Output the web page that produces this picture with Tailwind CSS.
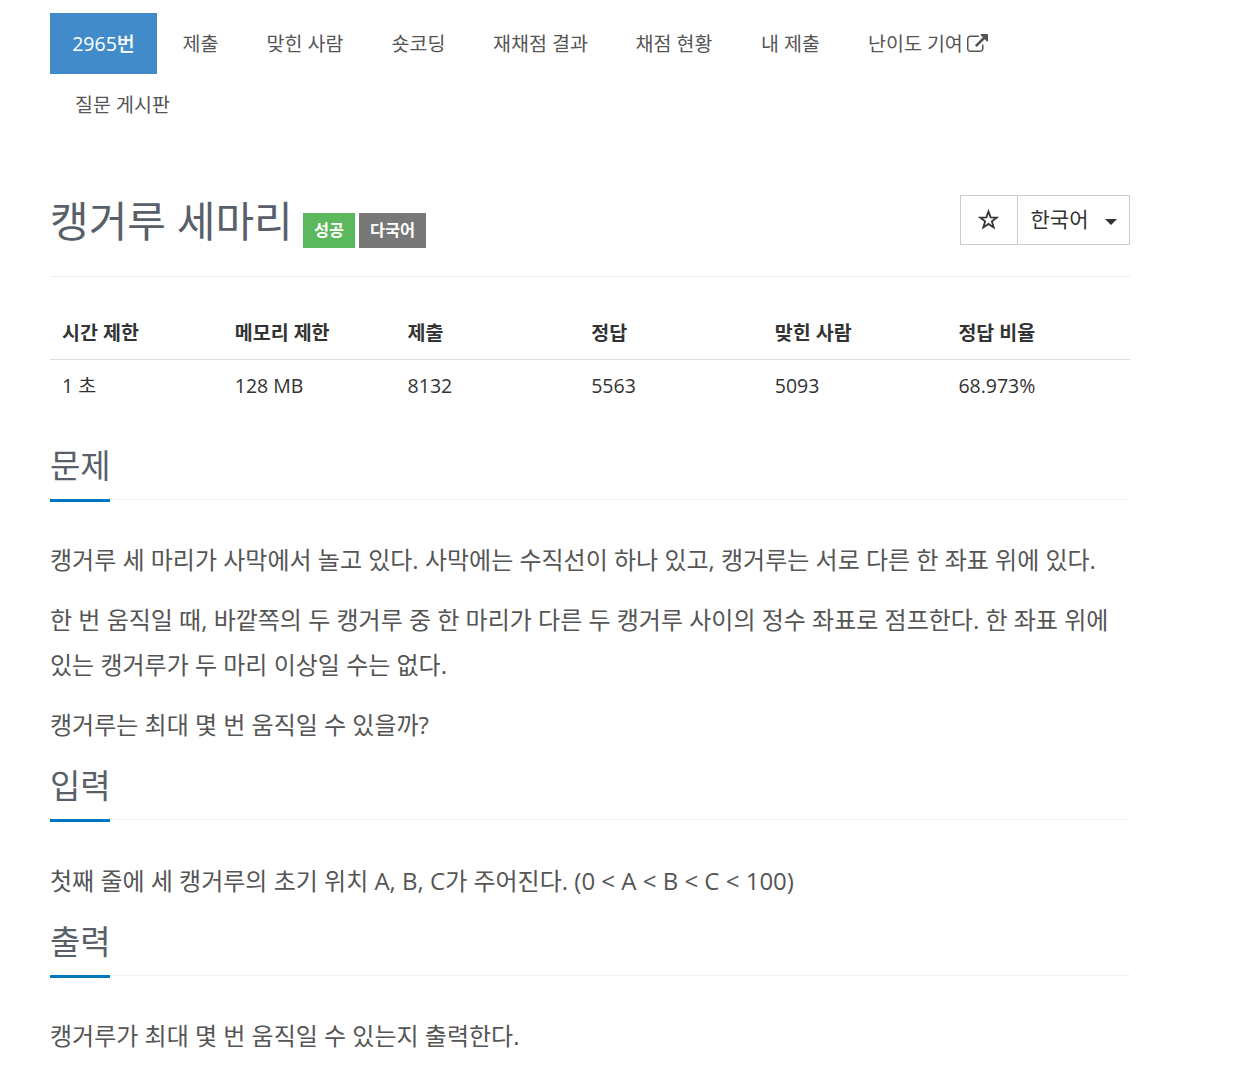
<!DOCTYPE html>
<html lang="ko">
<head>
    <meta charset="UTF-8">
    <meta name="viewport" content="width=device-width, initial-scale=1.0">
    <title>2965번: 캥거루 세마리</title>
    <script src="https://cdn.jsdelivr.net/npm/@tailwindcss/browser@4"></script>
</head>
<body class="bg-white font-['Open_Sans','Noto_Sans_CJK_KR',sans-serif] text-[#333]">
    <div class="ml-[50px] w-[1080px] pt-[13px]">
        <nav>
            <ul class="flex flex-wrap text-[19.5px] leading-[61px] text-[#555]">
                <li class="w-[107px] bg-[#428bca] text-center text-white"><a href="#">2965<span class="font-medium">번</span></a></li>
                <li class="w-[87px] text-center"><a href="#">제출</a></li>
                <li class="w-[122px] text-center"><a href="#">맞힌 사람</a></li>
                <li class="w-[105px] text-center"><a href="#">숏코딩</a></li>
                <li class="w-[139px] text-center"><a href="#">재채점 결과</a></li>
                <li class="w-[128px] text-center"><a href="#">채점 현황</a></li>
                <li class="w-[105px] text-center"><a href="#">내 제출</a></li>
                <li class="w-[170px] pl-[25px]"><a href="#" class="flex items-center gap-1">난이도 기여
                    <svg class="h-[18px] w-[21px] -translate-y-px" viewBox="0 0 1792 1536" fill="currentColor"><path d="M1408 928v320q0 119-84.500 203.500t-203.500 84.500h-832q-119 0-203.500-84.500t-84.500-203.500v-832q0-119 84.500-203.500t203.500-84.500h704q14 0 23 9t9 23v64q0 14-9 23t-23 9h-704q-66 0-113 47t-47 113v832q0 66 47 113t113 47h832q66 0 113-47t47-113v-320q0-14 9-23t23-9h64q14 0 23 9t9 23zM1792 64v512q0 26-19 45t-45 19-45-19l-176-176-652 652q-10 10-23 10t-23-10l-114-114q-10-10-10-23t10-23l652-652-176-176q-19-19-19-45t19-45 45-19h512q26 0 45 19t19 45z"/></svg></a></li>
                <li class="w-[145px] text-center"><a href="#">질문 게시판</a></li>
            </ul>
        </nav>

        <header class="mt-[60px] flex h-[82px] justify-between border-b border-[#eee]">
            <div class="flex">
                <h1 class="w-[253px] text-[42px] leading-[51px] text-[#585f69]">캥거루 세마리</h1>
                <div class="mt-[18px] flex gap-1 text-[16.4px] font-bold leading-[34px] text-white">
                    <span class="h-[35px] w-[52px] bg-[#5cb85c] text-center">성공</span>
                    <span class="h-[35px] w-[67px] bg-[#777] text-center">다국어</span>
                </div>
            </div>
            <div class="flex h-[50px] w-[170px] border border-[#ccc] text-[21px]">
                <button class="flex w-[57px] items-center justify-center border-r border-[#ccc]">
                    <svg class="size-[21px] -translate-x-px -translate-y-px" viewBox="0 0 21 21" fill="none" stroke="currentColor" stroke-width="1.8"><path d="M10.500 2.500l2.100 5.800 6.200.2-4.900 3.900 1.800 6-5.200-3.500-5.200 3.500 1.800-6L2.200 8.500l6.200-.2z"/></svg>
                </button>
                <button class="flex flex-1 items-center pl-[12.5px]">한국어
                    <span class="ml-[16.5px] mt-1 border-x-[6px] border-t-[6px] border-x-transparent border-t-[#333]"></span>
                </button>
            </div>
        </header>

        <table class="mt-[29px] w-full table-fixed text-left text-[19.5px]">
            <thead>
                <tr class="h-[53px] border-b border-[#ddd]">
                    <th class="w-[16%] pl-3">시간 제한</th>
                    <th class="w-[16%] pl-3">메모리 제한</th>
                    <th class="w-[17%] pl-3">제출</th>
                    <th class="w-[17%] pl-3">정답</th>
                    <th class="w-[17%] pl-3">맞힌 사람</th>
                    <th class="w-[17%] pl-3">정답 비율</th>
                </tr>
            </thead>
            <tbody>
                <tr class="h-[52px]">
                    <td class="pl-3">1 초</td>
                    <td class="pl-3">128 MB</td>
                    <td class="pl-3">8132</td>
                    <td class="pl-3">5563</td>
                    <td class="pl-3">5093</td>
                    <td class="pl-3">68.973%</td>
                </tr>
            </tbody>
        </table>

        <section class="mt-[32px] text-[24px] leading-[45px] text-[#555]">
            <div class="flex h-[57px] border-b border-dotted border-[#e4e4e4]">
                <h2 class="h-[59px] w-[60px] whitespace-nowrap border-b-3 border-[#0076bd] text-[33px] leading-[46px] text-[#585f69]">문제</h2>
            </div>
            <p class="mt-[37px]">캥거루 세 마리가 사막에서 놀고 있다. 사막에는 수직선이 하나 있고, 캥거루는 서로 다른 한 좌표 위에 있다.</p>
            <p class="mt-[15px]">한 번 움직일 때, 바깥쪽의 두 캥거루 중 한 마리가 다른 두 캥거루 사이의 정수 좌표로 점프한다. 한 좌표 위에<br>있는 캥거루가 두 마리 이상일 수는 없다.</p>
            <p class="mt-[15px]">캥거루는 최대 몇 번 움직일 수 있을까?</p>
        </section>

        <section class="mt-[16px] text-[24px] leading-[45px] text-[#555]">
            <div class="flex h-[57px] border-b border-dotted border-[#e4e4e4]">
                <h2 class="h-[59px] w-[60px] whitespace-nowrap border-b-3 border-[#0076bd] text-[33px] leading-[46px] text-[#585f69]">입력</h2>
            </div>
            <p class="mt-[38px]">첫째 줄에 세 캥거루의 초기 위치 A, B, C가 주어진다. (0 &lt; A &lt; B &lt; C &lt; 100)</p>
        </section>

        <section class="mt-[16px] text-[24px] leading-[45px] text-[#555]">
            <div class="flex h-[57px] border-b border-dotted border-[#e4e4e4]">
                <h2 class="h-[59px] w-[60px] whitespace-nowrap border-b-3 border-[#0076bd] text-[33px] leading-[46px] text-[#585f69]">출력</h2>
            </div>
            <p class="mt-[37px]">캥거루가 최대 몇 번 움직일 수 있는지 출력한다.</p>
        </section>
    </div>
</body>
</html>
